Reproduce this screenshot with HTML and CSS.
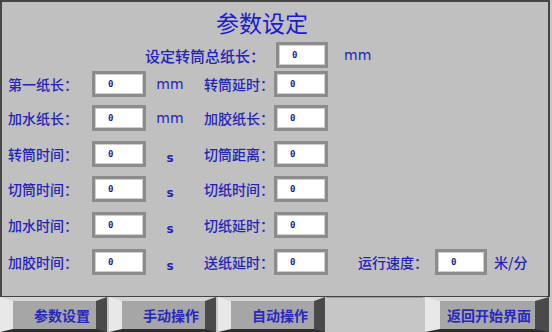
FILE: index.html
```html
<!DOCTYPE html>
<html lang="zh">
<head>
    <meta charset="UTF-8">
    <title>参数设定</title>
    <link rel="stylesheet" href="styles.css">
</head>
<body>
    <div class="screen">
        <div class="panel">
            <div class="title">参数设定</div>

            <div class="form">
                <!-- row 1 -->
                <div class="cell label wide">设定转筒总纸长：</div>
                <div class="cell"><div class="num shift">0</div></div>
                <div class="cell unit-right">mm</div>

                <!-- row 2 -->
                <div class="cell label">第一纸长：</div>
                <div class="cell"><div class="num">0</div></div>
                <div class="cell unit">mm</div>
                <div class="cell label second">转筒延时：</div>
                <div class="cell"><div class="num">0</div></div>
                <div class="cell"></div>

                <!-- row 3 -->
                <div class="cell label">加水纸长：</div>
                <div class="cell"><div class="num">0</div></div>
                <div class="cell unit">mm</div>
                <div class="cell label second">加胶纸长：</div>
                <div class="cell"><div class="num">0</div></div>
                <div class="cell"></div>

                <!-- row 4 -->
                <div class="cell label">转筒时间：</div>
                <div class="cell"><div class="num">0</div></div>
                <div class="cell unit sec">s</div>
                <div class="cell label second">切筒距离：</div>
                <div class="cell"><div class="num">0</div></div>
                <div class="cell"></div>

                <!-- row 5 -->
                <div class="cell label">切筒时间：</div>
                <div class="cell"><div class="num">0</div></div>
                <div class="cell unit sec">s</div>
                <div class="cell label second">切纸时间：</div>
                <div class="cell"><div class="num">0</div></div>
                <div class="cell"></div>

                <!-- row 6 -->
                <div class="cell label">加水时间：</div>
                <div class="cell"><div class="num">0</div></div>
                <div class="cell unit sec">s</div>
                <div class="cell label second">切纸延时：</div>
                <div class="cell"><div class="num">0</div></div>
                <div class="cell"></div>

                <!-- row 7 -->
                <div class="cell label">加胶时间：</div>
                <div class="cell"><div class="num">0</div></div>
                <div class="cell unit sec">s</div>
                <div class="cell label second">送纸延时：</div>
                <div class="cell"><div class="num">0</div></div>
                <div class="cell speed">
                    <span class="label">运行速度：</span>
                    <div class="num small">0</div>
                    <span class="speed-unit">米/分</span>
                </div>
            </div>
        </div>

        <div class="nav">
            <div class="nav-btn">参数设置</div>
            <div class="nav-btn">手动操作</div>
            <div class="nav-btn">自动操作</div>
            <div class="nav-spacer"></div>
            <div class="nav-btn back">返回开始界面</div>
        </div>
    </div>
</body>
</html>
```

FILE: styles.css
```css
body {
    margin: 0;
    background-color: #c6c6c6;
    font-family: "Noto Sans CJK SC", "DejaVu Sans", sans-serif;
    color: #2424b8;
}
.screen {
    width: 552px;
    height: 332px;
    overflow: hidden;
    display: flex;
    flex-direction: column;
}
.panel {
    width: 550px;
    height: 297px;
    box-sizing: border-box;
    background: #c0c0c0;
    border: 2px solid #454545;
    border-bottom-width: 1px;
    padding-left: 6px;
}
.title {
    margin-top: 7px;
    padding-right: 32px;
    text-align: center;
    font-size: 23px;
    line-height: 26px;
    color: #1a1ad4;
}
.form {
    margin-top: 7px;
    display: grid;
    grid-template-columns: 84px 54px 48px 80px 54px 1fr;
    grid-template-rows: 29px 34px 36px 35px 36px 37px 26px;
}
.cell {
    height: 26px;
    display: flex;
    align-items: center;
}
.label {
    font-size: 14px;
    font-weight: 500;
    white-space: nowrap;
}
.wide {
    grid-column: 1 / 5;
    justify-content: flex-end;
    padding-right: 9px;
    font-size: 15px;
}
.second {
    padding-left: 10px;
}
.unit {
    justify-content: center;
    font-family: "DejaVu Sans", sans-serif;
    font-size: 14px;
}
.unit-right {
    padding-left: 16px;
    font-family: "DejaVu Sans", sans-serif;
    font-size: 14px;
}
.sec {
    font-size: 12px;
    font-weight: bold;
    padding-top: 4px;
}
.num {
    width: 54px;
    height: 26px;
    box-sizing: border-box;
    border: 3px solid #8c8c8c;
    box-shadow: inset 0 0 0 1px #cfcfcf;
    background: #fff;
    padding-left: 13px;
    font-family: "DejaVu Sans Mono", monospace;
    font-weight: bold;
    font-size: 9px;
    line-height: 20px;
    color: #18189c;
}
.shift {
    margin-left: 2px;
    width: 52px;
}
.speed {
    padding-left: 30px;
}
.num.small {
    width: 52px;
    margin-left: 7px;
}
.speed-unit {
    margin-left: 7px;
    font-size: 14px;
    font-weight: 500;
}
.nav {
    flex: 1;
    display: flex;
    gap: 2px;
}
.nav-btn {
    width: 107px;
    box-sizing: border-box;
    display: flex;
    align-items: center;
    justify-content: flex-end;
    padding-right: 6px;
    background: #a6a6a6;
    border-left: 13px solid #e8e8e8;
    border-top: 4px solid #d4d4d4;
    border-right: 11px solid #4a4a4a;
    border-bottom: 3px solid #2e2e2e;
    font-size: 14px;
    font-weight: bold;
    color: #2828c0;
}
.nav-spacer {
    flex: 1;
    border-top: 1px solid #9a9a9a;
}
.nav-btn.back {
    width: 124px;
    margin-right: 3px;
    border-left-width: 15px;
    border-right-width: 14px;
    padding-right: 4px;
}
```
